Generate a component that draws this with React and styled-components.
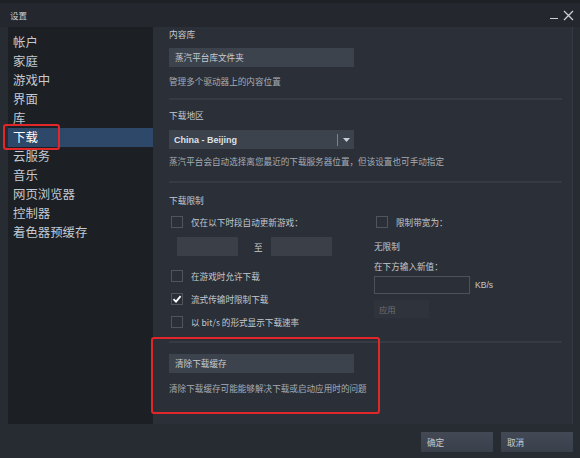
import React from "react";
import styled, { createGlobalStyle } from "styled-components";

const GlobalStyle = createGlobalStyle`
  html, body {
    margin: 0;
    padding: 0;
    background: #272b32;
  }
  body {
    font-family: "Noto Sans CJK SC", "Noto Sans", "Liberation Sans", sans-serif;
  }
`;

const menu = ["帐户", "家庭", "游戏中", "界面", "库", "下载", "云服务", "音乐", "网页浏览器", "控制器", "着色器预缓存"];

const Check = ({ checked, children }) => (
  <CheckRow>
    <Box>
      {checked && (
        <svg width="10" height="10" viewBox="0 0 10 10">
          <path d="M1.5 5.2 L4 7.6 L8.6 2.2" fill="none" stroke="#ffffff" strokeWidth="1.8" />
        </svg>
      )}
    </Box>
    <span>{children}</span>
  </CheckRow>
);

const App = () => {
  return (
    <Window>
      <GlobalStyle />
      <TitleBar>
        <Title>设置</Title>
        <Controls>
          <MinBtn />
          <svg width="11" height="11" viewBox="0 0 11 11">
            <path d="M1 1 L10 10 M10 1 L1 10" stroke="#c9ced4" strokeWidth="1.3" />
          </svg>
        </Controls>
      </TitleBar>

      <Main>
        <Sidebar>
          {menu.map((m) => (
            <MenuItem key={m} active={m === "下载"}>
              {m}
              {m === "下载" && <SideMark />}
            </MenuItem>
          ))}
        </Sidebar>

        <Panel>
          <Label>内容库</Label>
          <WideButton>蒸汽平台库文件夹</WideButton>
          <Desc gap={7}>管理多个驱动器上的内容位置</Desc>
          <Divider top={10} bottom={9} />

          <Label>下载地区</Label>
          <Select>
            <span>China - Beijing</span>
            <SelectArrow>
              <svg width="7" height="4" viewBox="0 0 7 4">
                <path d="M0 0 L7 0 L3.5 4 Z" fill="#c9ced4" />
              </svg>
            </SelectArrow>
          </Select>
          <Desc gap={5}>蒸汽平台会自动选择离您最近的下载服务器位置，但该设置也可手动指定</Desc>
          <Divider top={13} bottom={11} />

          <Label>下载限制</Label>
          <LimitGrid>
            <Column>
              <Check>仅在以下时段自动更新游戏：</Check>
              <TimeRow>
                <TimeBox />
                <To>至</To>
                <TimeBox />
              </TimeRow>
              <Spaced gap={13}>
                <Check>在游戏时允许下载</Check>
              </Spaced>
              <Spaced gap={9}>
                <Check checked>流式传输时限制下载</Check>
              </Spaced>
              <Spaced gap={9}>
                <Check>以 bit/s 的形式显示下载速率</Check>
              </Spaced>
            </Column>
            <Column>
              <Check>限制带宽为：</Check>
              <PlainText gap={10}>无限制</PlainText>
              <PlainText gap={6}>在下方输入新值：</PlainText>
              <RateRow>
                <RateInput />
                <span>KB/s</span>
              </RateRow>
              <ApplyButton>应用</ApplyButton>
            </Column>
          </LimitGrid>

          <CacheSection>
            <Divider top={0} bottom={5} />
            <WideButton>清除下载缓存</WideButton>
            <Desc gap={8}>清除下载缓存可能能够解决下载或启动应用时的问题</Desc>
            <SectionMark />
          </CacheSection>
        </Panel>
      </Main>

      <Footer>
        <FooterButton>确定</FooterButton>
        <FooterButton>取消</FooterButton>
      </Footer>
    </Window>
  );
};

const Window = styled.div`
  width: 580px;
  height: 458px;
  display: flex;
  flex-direction: column;
  background: #272b32;
  border-top: 3px solid #1e2126;
  box-sizing: border-box;
  overflow: hidden;
`;

const TitleBar = styled.div`
  height: 24px;
  display: flex;
  align-items: center;
  justify-content: space-between;
  padding: 0 6px 0 10px;
  background: #24282e;
`;

const Title = styled.div`
  font-size: 8.5px;
  color: #c9ced4;
`;

const Controls = styled.div`
  display: flex;
  align-items: center;
  gap: 5px;
`;

const MinBtn = styled.div`
  width: 8px;
  height: 1px;
  margin-top: 7px;
  background: #c9ced4;
`;

const Main = styled.div`
  display: flex;
  height: 397px;
  margin: 0 7px 0 8px;
`;

const Sidebar = styled.div`
  width: 145px;
  background: #1c1f23;
  padding-top: 6px;
  box-sizing: border-box;
`;

const MenuItem = styled.div`
  position: relative;
  height: 19px;
  line-height: 19px;
  padding-left: 5px;
  font-size: 12.4px;
  color: ${(p) => (p.active ? "#ffffff" : "#c3cad2")};
  background: ${(p) => (p.active ? "#2d4868" : "transparent")};
`;

const SideMark = styled.div`
  position: absolute;
  left: -5px;
  top: -4px;
  width: 57px;
  height: 26px;
  border: 2px solid #e2272b;
  border-radius: 3px;
  box-sizing: border-box;
`;

const Panel = styled.div`
  flex: 1;
  background: #2b2f37;
  padding: 1px 10px 0 16px;
  border-right: 1px solid #343841;
  box-sizing: border-box;
  display: flex;
  flex-direction: column;
  align-items: flex-start;
`;

const Label = styled.div`
  font-size: 8.7px;
  line-height: 14px;
  color: #c4c9cf;
`;

const WideButton = styled.div`
  width: 185px;
  height: 19px;
  margin-top: 6px;
  padding-left: 6px;
  box-sizing: border-box;
  background: #3d434d;
  color: #c6cbd1;
  font-size: 8.6px;
  line-height: 19px;
`;

const Desc = styled.div`
  margin-top: ${(p) => p.gap}px;
  font-size: 8.6px;
  line-height: 14px;
  color: #a5acb4;
`;

const Divider = styled.div`
  align-self: stretch;
  height: 2px;
  margin: ${(p) => p.top}px 0 ${(p) => p.bottom}px;
  background: #363b43;
`;

const Select = styled.div`
  width: 185px;
  height: 19px;
  margin-top: 7px;
  padding-left: 5px;
  box-sizing: border-box;
  background: #3d434d;
  display: flex;
  align-items: center;
  justify-content: space-between;
  font-family: "Liberation Sans", sans-serif;
  font-size: 9px;
  font-weight: 700;
  color: #dde1e5;
`;

const SelectArrow = styled.div`
  width: 16px;
  height: 12px;
  border-left: 1px solid #7b828c;
  display: flex;
  align-items: center;
  justify-content: center;
`;

const LimitGrid = styled.div`
  display: grid;
  grid-template-columns: 205px 1fr;
  margin-top: 7px;
  align-self: stretch;
`;

const Column = styled.div`
  display: flex;
  flex-direction: column;
  align-items: flex-start;
`;

const CheckRow = styled.div`
  display: flex;
  align-items: center;
  gap: 8px;
  padding-left: 2px;
  height: 14px;
  font-size: 8.6px;
  color: #c4c9cf;
`;

const Box = styled.div`
  width: 12px;
  height: 12px;
  border: 1px solid #50555d;
  box-sizing: border-box;
  display: flex;
  align-items: center;
  justify-content: center;
`;

const Spaced = styled.div`
  margin-top: ${(p) => p.gap}px;
`;

const TimeRow = styled.div`
  display: flex;
  align-items: center;
  height: 19px;
  margin: 8px 0 0 8px;
  font-size: 8.6px;
  color: #c4c9cf;
`;

const To = styled.span`
  margin: 0 8px 0 16px;
`;

const TimeBox = styled.div`
  width: 61px;
  height: 19px;
  background: #3a3f48;
`;

const PlainText = styled.div`
  margin-top: ${(p) => p.gap}px;
  font-size: 8.6px;
  line-height: 14px;
  color: #c4c9cf;
`;

const RateRow = styled.div`
  display: flex;
  align-items: center;
  gap: 5px;
  margin-top: 3px;
  font-family: "Liberation Sans", sans-serif;
  font-size: 8.6px;
  color: #c4c9cf;
`;

const RateInput = styled.div`
  width: 96px;
  height: 18px;
  border: 1px solid #4c525b;
  box-sizing: border-box;
  background: #2b2f37;
`;

const ApplyButton = styled.div`
  width: 55px;
  height: 18px;
  margin-top: 6px;
  padding-left: 5px;
  box-sizing: border-box;
  background: #2f333b;
  color: #6a7079;
  font-size: 8.4px;
  line-height: 18px;
`;

const CacheSection = styled.div`
  position: relative;
  align-self: stretch;
  display: flex;
  flex-direction: column;
  align-items: flex-start;
  margin-top: 12px;
`;

const SectionMark = styled.div`
  position: absolute;
  left: -18px;
  top: -4px;
  width: 229px;
  height: 77px;
  border: 2px solid #e2272b;
  border-radius: 3px;
  box-sizing: border-box;
`;

const Footer = styled.div`
  display: flex;
  justify-content: flex-end;
  gap: 8px;
  padding: 8px 7px 0 0;
`;

const FooterButton = styled.div`
  width: 72px;
  height: 20px;
  padding-left: 6px;
  box-sizing: border-box;
  background: linear-gradient(#434a55, #3a404a);
  color: #c6cbd1;
  font-size: 8.6px;
  line-height: 20px;
`;

export default App;
